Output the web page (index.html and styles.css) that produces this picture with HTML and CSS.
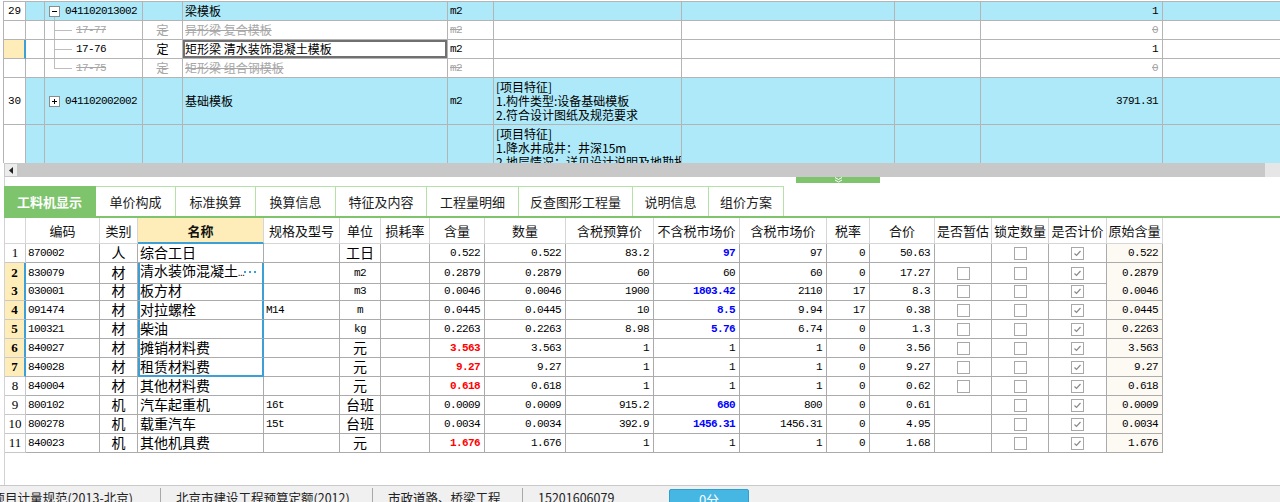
FILE: index.html
```html
<!DOCTYPE html>
<html lang="zh-CN">
<head>
<meta charset="utf-8">
<title>工料机显示</title>
<link rel="stylesheet" href="styles.css">
</head>
<body>
<div class="top">
  <div class="tgrid">
    <div class="trow hl">
      <div class="tc num m">29</div>
      <div class="tc"></div>
      <div class="tc code m root"><span class="tbox minus"></span>041102013002</div>
      <div class="tc"></div>
      <div class="tc z">梁模板</div>
      <div class="tc m">m2</div>
      <div class="tc"></div>
      <div class="tc"></div>
      <div class="tc"></div>
      <div class="tc m r">1</div>
      <div class="tc"></div>
    </div>
    <div class="trow dis">
      <div class="tc num"></div>
      <div class="tc"></div>
      <div class="tc sub m">17-77</div>
      <div class="tc z ctr">定</div>
      <div class="tc z">异形梁 复合模板</div>
      <div class="tc m">m2</div>
      <div class="tc"></div>
      <div class="tc"></div>
      <div class="tc"></div>
      <div class="tc m r">0</div>
      <div class="tc"></div>
    </div>
    <div class="trow">
      <div class="tc num cur"></div>
      <div class="tc"></div>
      <div class="tc sub m">17-76</div>
      <div class="tc z ctr">定</div>
      <div class="tc z focus">矩形梁 清水装饰混凝土模板</div>
      <div class="tc m">m2</div>
      <div class="tc"></div>
      <div class="tc"></div>
      <div class="tc"></div>
      <div class="tc m r">1</div>
      <div class="tc"></div>
    </div>
    <div class="trow dis">
      <div class="tc num"></div>
      <div class="tc"></div>
      <div class="tc sub end m">17-75</div>
      <div class="tc z ctr">定</div>
      <div class="tc z">矩形梁 组合钢模板</div>
      <div class="tc m">m2</div>
      <div class="tc"></div>
      <div class="tc"></div>
      <div class="tc"></div>
      <div class="tc m r">0</div>
      <div class="tc"></div>
    </div>
    <div class="trow hl tall">
      <div class="tc num m mid">30</div>
      <div class="tc"></div>
      <div class="tc code m mid"><span class="tbox plus"></span>041102002002</div>
      <div class="tc"></div>
      <div class="tc z mid">基础模板</div>
      <div class="tc m mid">m2</div>
      <div class="tc z desc">[项目特征]<br>1.构件类型:设备基础模板<br>2.符合设计图纸及规范要求</div>
      <div class="tc"></div>
      <div class="tc"></div>
      <div class="tc m r mid">3791.31</div>
      <div class="tc"></div>
    </div>
    <div class="trow hl last">
      <div class="tc num"></div>
      <div class="tc"></div>
      <div class="tc"></div>
      <div class="tc"></div>
      <div class="tc"></div>
      <div class="tc"></div>
      <div class="tc z desc">[项目特征]<br>1.降水井成井：井深15m<br>2.地层情况：详见设计说明及地勘报告</div>
      <div class="tc"></div>
      <div class="tc"></div>
      <div class="tc"></div>
      <div class="tc"></div>
    </div>
  </div>
</div>

<div class="hscroll">
  <div class="sarrow"><svg width="4" height="7" viewBox="0 0 4 7"><path d="M4 0 L0 3.5 L4 7 Z" fill="#222"/></svg></div>
  <div class="strack"></div>
  <div class="send"></div>
</div>

<div class="lower">
  <div class="gap"><div class="handle"><svg width="9" height="6" viewBox="0 0 9 6"><path d="M1 0.5 L4.5 2.5 L8 0.5 M1 3 L4.5 5 L8 3" fill="none" stroke="#fff" stroke-width="1"/></svg></div></div>
  <div class="tabs">
    <div class="tab on">工料机显示</div>
    <div class="tab w80">单价构成</div>
    <div class="tab w80">标准换算</div>
    <div class="tab w80">换算信息</div>
    <div class="tab w91">特征及内容</div>
    <div class="tab w92">工程量明细</div>
    <div class="tab w114">反查图形工程量</div>
    <div class="tab w76">说明信息</div>
    <div class="tab w75">组价方案</div>
  </div>
  <div class="tabline"></div>

  <div class="lgrid">
    <div class="lrow lhead">
      <div class="hc"></div>
      <div class="hc">编码</div>
      <div class="hc">类别</div>
      <div class="hc hname">名称</div>
      <div class="hc">规格及型号</div>
      <div class="hc">单位</div>
      <div class="hc">损耗率</div>
      <div class="hc">含量</div>
      <div class="hc">数量</div>
      <div class="hc">含税预算价</div>
      <div class="hc">不含税市场价</div>
      <div class="hc">含税市场价</div>
      <div class="hc">税率</div>
      <div class="hc">合价</div>
      <div class="hc">是否暂估</div>
      <div class="hc">锁定数量</div>
      <div class="hc">是否计价</div>
      <div class="hc">原始含量</div>
    </div>

    <div class="lrow">
      <div class="lc rn">1</div>
      <div class="lc m">870002</div>
      <div class="lc z ctr">人</div>
      <div class="lc z nm">综合工日</div>
      <div class="lc m"></div>
      <div class="lc z ctr">工日</div>
      <div class="lc"></div>
      <div class="lc m r">0.522</div>
      <div class="lc m r">0.522</div>
      <div class="lc m r">83.2</div>
      <div class="lc m r blue">97</div>
      <div class="lc m r">97</div>
      <div class="lc m r">0</div>
      <div class="lc m r">50.63</div>
      <div class="lc ctr"></div>
      <div class="lc ctr"><span class="cb"></span></div>
      <div class="lc ctr"><span class="cb"><svg width="11" height="11" viewBox="0 0 11 11"><path d="M2.5 5.5 L4.5 7.5 L8.5 3" fill="none" stroke="#8a8a8a" stroke-width="1.2"/></svg></span></div>
      <div class="lc m r orig">0.522</div>
    </div>

    <div class="lrow">
      <div class="lc rn sel">2</div>
      <div class="lc m">830079</div>
      <div class="lc z ctr">材</div>
      <div class="lc z nm box bt"><span class="nmtxt">清水装饰混凝土<span class="ell">…</span></span><svg class="dots" width="12" height="2" viewBox="0 0 12 2"><rect x="0" y="0" width="2" height="2" fill="#3c9fd6"/><rect x="5" y="0" width="2" height="2" fill="#3c9fd6"/><rect x="10" y="0" width="2" height="2" fill="#3c9fd6"/></svg></div>
      <div class="lc m"></div>
      <div class="lc m ctr">m2</div>
      <div class="lc"></div>
      <div class="lc m r">0.2879</div>
      <div class="lc m r">0.2879</div>
      <div class="lc m r">60</div>
      <div class="lc m r">60</div>
      <div class="lc m r">60</div>
      <div class="lc m r">0</div>
      <div class="lc m r">17.27</div>
      <div class="lc ctr"><span class="cb"></span></div>
      <div class="lc ctr"><span class="cb"></span></div>
      <div class="lc ctr"><span class="cb"><svg width="11" height="11" viewBox="0 0 11 11"><path d="M2.5 5.5 L4.5 7.5 L8.5 3" fill="none" stroke="#8a8a8a" stroke-width="1.2"/></svg></span></div>
      <div class="lc m r orig">0.2879</div>
    </div>

    <div class="lrow">
      <div class="lc rn sel">3</div>
      <div class="lc m">030001</div>
      <div class="lc z ctr">材</div>
      <div class="lc z nm box">板方材</div>
      <div class="lc m"></div>
      <div class="lc m ctr">m3</div>
      <div class="lc"></div>
      <div class="lc m r">0.0046</div>
      <div class="lc m r">0.0046</div>
      <div class="lc m r">1900</div>
      <div class="lc m r blue">1803.42</div>
      <div class="lc m r">2110</div>
      <div class="lc m r">17</div>
      <div class="lc m r">8.3</div>
      <div class="lc ctr"><span class="cb"></span></div>
      <div class="lc ctr"><span class="cb"></span></div>
      <div class="lc ctr"><span class="cb"><svg width="11" height="11" viewBox="0 0 11 11"><path d="M2.5 5.5 L4.5 7.5 L8.5 3" fill="none" stroke="#8a8a8a" stroke-width="1.2"/></svg></span></div>
      <div class="lc m r orig">0.0046</div>
    </div>

    <div class="lrow">
      <div class="lc rn sel">4</div>
      <div class="lc m">091474</div>
      <div class="lc z ctr">材</div>
      <div class="lc z nm box">对拉螺栓</div>
      <div class="lc m">M14</div>
      <div class="lc m ctr">m</div>
      <div class="lc"></div>
      <div class="lc m r">0.0445</div>
      <div class="lc m r">0.0445</div>
      <div class="lc m r">10</div>
      <div class="lc m r blue">8.5</div>
      <div class="lc m r">9.94</div>
      <div class="lc m r">17</div>
      <div class="lc m r">0.38</div>
      <div class="lc ctr"><span class="cb"></span></div>
      <div class="lc ctr"><span class="cb"></span></div>
      <div class="lc ctr"><span class="cb"><svg width="11" height="11" viewBox="0 0 11 11"><path d="M2.5 5.5 L4.5 7.5 L8.5 3" fill="none" stroke="#8a8a8a" stroke-width="1.2"/></svg></span></div>
      <div class="lc m r orig">0.0445</div>
    </div>

    <div class="lrow">
      <div class="lc rn sel">5</div>
      <div class="lc m">100321</div>
      <div class="lc z ctr">材</div>
      <div class="lc z nm box">柴油</div>
      <div class="lc m"></div>
      <div class="lc m ctr">kg</div>
      <div class="lc"></div>
      <div class="lc m r">0.2263</div>
      <div class="lc m r">0.2263</div>
      <div class="lc m r">8.98</div>
      <div class="lc m r blue">5.76</div>
      <div class="lc m r">6.74</div>
      <div class="lc m r">0</div>
      <div class="lc m r">1.3</div>
      <div class="lc ctr"><span class="cb"></span></div>
      <div class="lc ctr"><span class="cb"></span></div>
      <div class="lc ctr"><span class="cb"><svg width="11" height="11" viewBox="0 0 11 11"><path d="M2.5 5.5 L4.5 7.5 L8.5 3" fill="none" stroke="#8a8a8a" stroke-width="1.2"/></svg></span></div>
      <div class="lc m r orig">0.2263</div>
    </div>

    <div class="lrow">
      <div class="lc rn sel">6</div>
      <div class="lc m">840027</div>
      <div class="lc z ctr">材</div>
      <div class="lc z nm box">摊销材料费</div>
      <div class="lc m"></div>
      <div class="lc z ctr">元</div>
      <div class="lc"></div>
      <div class="lc m r red">3.563</div>
      <div class="lc m r">3.563</div>
      <div class="lc m r">1</div>
      <div class="lc m r">1</div>
      <div class="lc m r">1</div>
      <div class="lc m r">0</div>
      <div class="lc m r">3.56</div>
      <div class="lc ctr"><span class="cb"></span></div>
      <div class="lc ctr"><span class="cb"></span></div>
      <div class="lc ctr"><span class="cb"><svg width="11" height="11" viewBox="0 0 11 11"><path d="M2.5 5.5 L4.5 7.5 L8.5 3" fill="none" stroke="#8a8a8a" stroke-width="1.2"/></svg></span></div>
      <div class="lc m r orig">3.563</div>
    </div>

    <div class="lrow">
      <div class="lc rn sel">7</div>
      <div class="lc m">840028</div>
      <div class="lc z ctr">材</div>
      <div class="lc z nm box bb">租赁材料费</div>
      <div class="lc m"></div>
      <div class="lc z ctr">元</div>
      <div class="lc"></div>
      <div class="lc m r red">9.27</div>
      <div class="lc m r">9.27</div>
      <div class="lc m r">1</div>
      <div class="lc m r">1</div>
      <div class="lc m r">1</div>
      <div class="lc m r">0</div>
      <div class="lc m r">9.27</div>
      <div class="lc ctr"><span class="cb"></span></div>
      <div class="lc ctr"><span class="cb"></span></div>
      <div class="lc ctr"><span class="cb"><svg width="11" height="11" viewBox="0 0 11 11"><path d="M2.5 5.5 L4.5 7.5 L8.5 3" fill="none" stroke="#8a8a8a" stroke-width="1.2"/></svg></span></div>
      <div class="lc m r orig">9.27</div>
    </div>

    <div class="lrow">
      <div class="lc rn">8</div>
      <div class="lc m">840004</div>
      <div class="lc z ctr">材</div>
      <div class="lc z nm">其他材料费</div>
      <div class="lc m"></div>
      <div class="lc z ctr">元</div>
      <div class="lc"></div>
      <div class="lc m r red">0.618</div>
      <div class="lc m r">0.618</div>
      <div class="lc m r">1</div>
      <div class="lc m r">1</div>
      <div class="lc m r">1</div>
      <div class="lc m r">0</div>
      <div class="lc m r">0.62</div>
      <div class="lc ctr"><span class="cb"></span></div>
      <div class="lc ctr"><span class="cb"></span></div>
      <div class="lc ctr"><span class="cb"><svg width="11" height="11" viewBox="0 0 11 11"><path d="M2.5 5.5 L4.5 7.5 L8.5 3" fill="none" stroke="#8a8a8a" stroke-width="1.2"/></svg></span></div>
      <div class="lc m r orig">0.618</div>
    </div>

    <div class="lrow">
      <div class="lc rn">9</div>
      <div class="lc m">800102</div>
      <div class="lc z ctr">机</div>
      <div class="lc z nm">汽车起重机</div>
      <div class="lc m">16t</div>
      <div class="lc z ctr">台班</div>
      <div class="lc"></div>
      <div class="lc m r">0.0009</div>
      <div class="lc m r">0.0009</div>
      <div class="lc m r">915.2</div>
      <div class="lc m r blue">680</div>
      <div class="lc m r">800</div>
      <div class="lc m r">0</div>
      <div class="lc m r">0.61</div>
      <div class="lc ctr"></div>
      <div class="lc ctr"><span class="cb"></span></div>
      <div class="lc ctr"><span class="cb"><svg width="11" height="11" viewBox="0 0 11 11"><path d="M2.5 5.5 L4.5 7.5 L8.5 3" fill="none" stroke="#8a8a8a" stroke-width="1.2"/></svg></span></div>
      <div class="lc m r orig">0.0009</div>
    </div>

    <div class="lrow">
      <div class="lc rn">10</div>
      <div class="lc m">800278</div>
      <div class="lc z ctr">机</div>
      <div class="lc z nm">载重汽车</div>
      <div class="lc m">15t</div>
      <div class="lc z ctr">台班</div>
      <div class="lc"></div>
      <div class="lc m r">0.0034</div>
      <div class="lc m r">0.0034</div>
      <div class="lc m r">392.9</div>
      <div class="lc m r blue">1456.31</div>
      <div class="lc m r">1456.31</div>
      <div class="lc m r">0</div>
      <div class="lc m r">4.95</div>
      <div class="lc ctr"></div>
      <div class="lc ctr"><span class="cb"></span></div>
      <div class="lc ctr"><span class="cb"><svg width="11" height="11" viewBox="0 0 11 11"><path d="M2.5 5.5 L4.5 7.5 L8.5 3" fill="none" stroke="#8a8a8a" stroke-width="1.2"/></svg></span></div>
      <div class="lc m r orig">0.0034</div>
    </div>

    <div class="lrow">
      <div class="lc rn">11</div>
      <div class="lc m">840023</div>
      <div class="lc z ctr">机</div>
      <div class="lc z nm">其他机具费</div>
      <div class="lc m"></div>
      <div class="lc z ctr">元</div>
      <div class="lc"></div>
      <div class="lc m r red">1.676</div>
      <div class="lc m r">1.676</div>
      <div class="lc m r">1</div>
      <div class="lc m r">1</div>
      <div class="lc m r">1</div>
      <div class="lc m r">0</div>
      <div class="lc m r">1.68</div>
      <div class="lc ctr"></div>
      <div class="lc ctr"><span class="cb"></span></div>
      <div class="lc ctr"><span class="cb"><svg width="11" height="11" viewBox="0 0 11 11"><path d="M2.5 5.5 L4.5 7.5 L8.5 3" fill="none" stroke="#8a8a8a" stroke-width="1.2"/></svg></span></div>
      <div class="lc m r orig">1.676</div>
    </div>
  </div>
</div>

<div class="status">
  <div class="si s1"><span>项目计量规范(2013-北京)</span></div>
  <div class="si s2">北京市建设工程预算定额(2012)</div>
  <div class="si s3">市政道路、桥梁工程</div>
  <div class="si s4">15201606079</div>
  <div class="sbtn">0分</div>
</div>
</body>
</html>
```

FILE: styles.css
```css
* { box-sizing: border-box; }
html, body { margin: 0; padding: 0; background: #fff; }
body {
  width: 1280px;
  height: 502px;
  overflow: hidden;
  font-family: "Noto Sans CJK SC", sans-serif;
  color: #000;
}

.z { font-family: "Noto Sans CJK SC", sans-serif; }
.m { font-family: "Liberation Mono", "Noto Sans CJK SC", monospace; font-size: 11px; letter-spacing: -0.6px; }
.r { text-align: right; justify-content: flex-end; }
.ctr { text-align: center; justify-content: center; }

/* ---------- top grid ---------- */
.top {
  height: 163px;
  overflow: hidden;
  padding: 1px 0 0 3px;
}
.tgrid {
  width: 1277px;
  border-left: 1px solid #b4b4b4;
  border-top: 1px solid #b4b4b4;
}
.trow {
  display: grid;
  grid-template-columns: 22px 19px 98px 40px 265px 46px 188px 213px 86px 182px 118px;
  height: 19px;
}
.trow.tall { height: 47px; }
.trow.last { height: 60px; }
.tc {
  border-right: 1px solid #b4b4b4;
  border-bottom: 1px solid #b4b4b4;
  font-size: 12px;
  line-height: 18px;
  padding: 0 2px;
  white-space: nowrap;
  overflow: hidden;
  background-color: #fff;
}
.tc.m { font-size: 11px; }
.tc.r { padding-right: 4px; }
.tc.ctr { padding: 0; }
.hl .tc { background-color: #aee9f9; }
.hl .tc.num { background-color: #fff; }
.tc.num { text-align: center; padding: 0; letter-spacing: 0; }
.tc.num.cur { background: #feedb8; border-right: 2px solid #3c9fd6; }
.mid { display: flex; align-items: center; }
.tc.num.mid { justify-content: center; }
.tc.desc { line-height: 14px; padding-top: 2px; }

.dis .tc { color: #a6a6a6; text-decoration: line-through; }
.tc.focus { box-shadow: inset 0 0 0 2px #707070; }

.code { display: flex; align-items: center; padding-left: 4px; }
.code.root {
  background-image: linear-gradient(#bdbdbd, #bdbdbd);
  background-size: 1px 4px;
  background-position: 9px 100%;
  background-repeat: no-repeat;
}
.tbox {
  width: 11px;
  height: 11px;
  border: 1px solid #8c8c8c;
  background-color: #fff;
  margin-right: 5px;
  flex: none;
  background-repeat: no-repeat;
  background-position: center;
}
.tbox.minus { background-image: linear-gradient(#000, #000); background-size: 5px 1px; }
.tbox.plus {
  background-image: linear-gradient(#000, #000), linear-gradient(#000, #000);
  background-size: 5px 1px, 1px 5px;
}
.sub {
  padding-left: 31px;
  background-image: linear-gradient(#bdbdbd, #bdbdbd), linear-gradient(#bdbdbd, #bdbdbd);
  background-size: 1px 100%, 18px 1px;
  background-position: 9px 0, 9px 9px;
  background-repeat: no-repeat;
}
.sub.end { background-size: 1px 10px, 18px 1px; }

/* ---------- horizontal scrollbar ---------- */
.hscroll {
  display: flex;
  height: 14px;
  margin-left: 4px;
}
.sarrow {
  width: 14px;
  background: #ececec;
  border: 1px solid #c8c8c8;
  display: flex;
  align-items: center;
  justify-content: center;
}
.strack { flex: 1; background: #c8c8c8; }
.send { width: 15px; background: #e6e6e6; }

/* ---------- lower panel ---------- */
.lower {
  height: 308px;
  margin-left: 4px;
  border-left: 1px solid #d2d2d2;
}
.gap { height: 9px; }
.handle {
  width: 84px;
  height: 6px;
  margin-left: 791px;
  background: #7ec46c;
  display: flex;
  justify-content: center;
  align-items: flex-start;
}
.tabs { display: flex; height: 30px; margin-left: -1px; }
.tab {
  width: 80px;
  border-top: 1px solid #b6e1a6;
  border-right: 1px solid #b6e1a6;
  font-size: 13px;
  color: #1e1e1e;
  display: flex;
  align-items: center;
  justify-content: center;
}
.tab.on { width: 92px; background: #7ec46c; border-color: #7ec46c; color: #fff; font-weight: bold; }
.tab.w80 { width: 80px; }
.tab.w91 { width: 91px; }
.tab.w92 { width: 92px; }
.tab.w114 { width: 114px; }
.tab.w76 { width: 76px; }
.tab.w75 { width: 75px; }
.tabline { height: 2px; background: #7ec46c; margin-left: -1px; }

.lrow {
  display: grid;
  grid-template-columns: 21px 74px 38px 126px 76px 41px 49px 55px 81px 88px 86px 87px 43px 65px 57px 57px 58px 56px;
  height: 19px;
}
.lrow.lhead { height: 26px; }
.hc {
  border-right: 1px solid #d6d6d6;
  border-bottom: 1px solid #d6d6d6;
  font-size: 13px;
  color: #111;
  display: flex;
  align-items: center;
  justify-content: center;
  white-space: nowrap;
  overflow: hidden;
}
.hc.hname { background: #feedb8; font-weight: bold; border-bottom: 2px solid #3c9fd6; }

.lc {
  border-right: 1px solid #ababab;
  border-bottom: 1px solid #ababab;
  font-size: 14px;
  line-height: 16px;
  padding: 0 2px;
  white-space: nowrap;
  display: flex;
  align-items: center;
}
.lc.z { line-height: 15px; padding-bottom: 2px; }
.lc.m { font-size: 11px; padding-left: 2px; }
.lc.r { padding-right: 4px; }
.lc.ctr { padding-left: 0; padding-right: 0; }
.lc.rn {
  font-family: "Liberation Serif", serif;
  font-size: 13px;
  justify-content: center;
  padding: 0;
  border-right-color: #c8c8c8;
  border-bottom-color: #c8c8c8;
}
.lc.rn.sel { background: #feedb8; font-weight: bold; border-right: 2px solid #3c9fd6; }
.lc.nm { padding-left: 2px; }
.lc.box { box-shadow: inset 2px 0 0 #3c9fd6, inset -1px 0 0 #3c9fd6; border-right: 1px solid #3c9fd6; }
.lc.box.bt { justify-content: space-between; }
.lc.box.bb { border-bottom: 2px solid #3c9fd6; padding-bottom: 1px; }
.ell { font-family: "Liberation Mono", monospace; font-size: 11px; letter-spacing: -1px; }
.dots { flex: none; margin-right: 5px; }
.blue { color: #0000ff; font-weight: bold; }
.red { color: #ff0000; font-weight: bold; }
.orig { background: #fdf9f3; }

.cb {
  width: 13px;
  height: 13px;
  border: 1px solid #a8a8a8;
  background: #fff;
  display: flex;
  align-items: center;
  justify-content: center;
}

/* ---------- status bar ---------- */
.status {
  height: 17px;
  border-top: 1px solid #c8c8c8;
  background: #f0f0f0;
  display: flex;
  align-items: flex-start;
  font-size: 12.5px;
  color: #222;
  white-space: nowrap;
}
.si {
  height: 15px;
  margin-top: 2px;
  line-height: 19px;
  border-right: 1px solid #a8a8a8;
  overflow: hidden;
}
.s1 { width: 161px; display: flex; justify-content: flex-end; padding-right: 27px; }
.s2 { width: 212px; padding-left: 15px; }
.s3 { width: 150px; padding-left: 15px; }
.s4 { width: 146px; padding-left: 15px; border-right: none; }
.sbtn {
  width: 80px;
  height: 16px;
  margin-top: 3px;
  background: #46b6e3;
  border: 1px solid #2f9fd3;
  border-radius: 2px 2px 0 0;
  color: #fff;
  text-align: center;
  font-size: 13px;
  line-height: 20px;
}
```
